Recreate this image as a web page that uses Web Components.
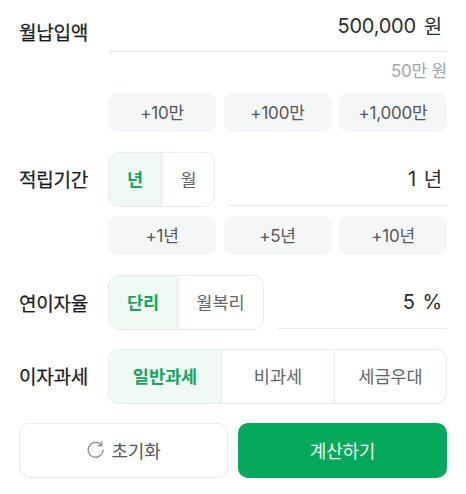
<!DOCTYPE html>
<html lang="ko">
<head>
<meta charset="utf-8">
<title>적금 계산기</title>
<style>
  html, body { margin: 0; padding: 0; background: #fff; }
  body { font-family: Inter, "Noto Sans CJK KR", sans-serif; width: 466px; height: 494px; overflow: hidden; }
</style>
</head>
<body>
<calc-form>
  <form-row label="월납입액" style="--label-top:18px; margin-top:4px">
    <amount-input value="500,000" unit="원" style="height:48px;padding-bottom:4px"></amount-input>
    <div style="font-size:17px;color:#a3a5a8;text-align:right;height:41px;line-height:38px;letter-spacing:-.2px">50만 원</div>
    <quick-buttons items="+10만,+100만,+1,000만"></quick-buttons>
  </form-row>
  <form-row label="적립기간" style="--label-top:17px; margin-top:20px">
    <div class="line" style="display:flex;gap:14px;margin-bottom:9px">
      <seg-toggle items="년,월" widths="53px,53px" style="width:107px"></seg-toggle>
      <amount-input value="1" unit="년" style="flex:1;height:54px"></amount-input>
    </div>
    <quick-buttons items="+1년,+5년,+10년"></quick-buttons>
  </form-row>
  <form-row label="연이자율" style="--label-top:18px; margin-top:20px">
    <div class="line" style="display:flex;gap:14px">
      <seg-toggle items="단리,월복리" widths="69px,85px" style="width:156px"></seg-toggle>
      <amount-input value="5" unit="%" style="flex:1;height:54px"></amount-input>
    </div>
  </form-row>
  <form-row label="이자과세" style="--label-top:17px; margin-top:19px">
    <seg-toggle items="일반과세,비과세,세금우대" widths="113px,112px,1fr"></seg-toggle>
  </form-row>
  <action-bar></action-bar>
</calc-form>

<script>
// 전체 폼 컨테이너
class CalcForm extends HTMLElement {
  constructor() {
    super();
    this.attachShadow({ mode: 'open' }).innerHTML = `
      <style>
        :host { display: block; padding: 0 19px 0 19px; color: #1d1f22; }
      </style>
      <slot></slot>`;
  }
}

// 왼쪽 라벨 + 오른쪽 내용
class FormRow extends HTMLElement {
  constructor() {
    super();
    const label = this.getAttribute('label') || '';
    this.attachShadow({ mode: 'open' }).innerHTML = `
      <style>
        :host { display: grid; grid-template-columns: 89px 339px; }
        .label {
          font-size: 19px; font-weight: 400; color: #1a1c1f; line-height: 24px;
          padding-top: var(--label-top, 14px); letter-spacing: -.2px;
          -webkit-text-stroke: .25px #1a1c1f;
        }
      </style>
      <div class="label">${label}</div>
      <div><slot></slot></div>`;
  }
}

// 밑줄 입력값
class AmountInput extends HTMLElement {
  constructor() {
    super();
    const value = this.getAttribute('value') || '';
    const unit = this.getAttribute('unit') || '';
    this.attachShadow({ mode: 'open' }).innerHTML = `
      <style>
        :host {
          display: flex; justify-content: flex-end; align-items: center; gap: 8px;
          box-sizing: border-box; border-bottom: 1px solid #e6e7e9;
          padding-right: 5px; font-size: 20px; letter-spacing: -.25px; color: #2a2c2f; min-width: 0;
        }
      </style>
      <span>${value}</span><span>${unit}</span>`;
  }
}

// +10만 같은 빠른 입력 버튼 (값에 콤마가 있어서 +로 나눈다)
class QuickButtons extends HTMLElement {
  constructor() {
    super();
    const items = (this.getAttribute('items') || '').split(',+').map(s => s.replace(/^\+/, ''));
    this.attachShadow({ mode: 'open' }).innerHTML = `
      <style>
        :host { display: grid; grid-template-columns: repeat(3, 108px); column-gap: 7.5px; }
        button {
          all: unset; box-sizing: border-box; height: 39px; border-radius: 9px; padding-bottom: 2px;
          background: #f5f6f8; color: #54575b; font-size: 17px; text-align: center;
          letter-spacing: -.2px;
        }
      </style>
      ${items.map(v => `<button>+${v}</button>`).join('')}`;
  }
}

// 세그먼트 토글, 첫 항목이 선택된 상태
class SegToggle extends HTMLElement {
  constructor() {
    super();
    const items = (this.getAttribute('items') || '').split(',');
    const widths = (this.getAttribute('widths') || '').split(',').join(' ');
    this.attachShadow({ mode: 'open' }).innerHTML = `
      <style>
        :host {
          display: grid; grid-template-columns: ${widths}; box-sizing: border-box;
          height: 55px; border: 1px solid #e7ecea; border-radius: 11px; overflow: hidden;
          flex: none; background: #fff;
        }
        div {
          display: flex; align-items: center; justify-content: center; padding-bottom: 3px;
          font-size: 17.5px; color: #63666a; border-left: 1px solid #e7ecea;
        }
        div.on {
          background: #f0faf5; color: #17a45e; font-weight: 700;
          border-left: 0; border-right: 1px solid #d9eee3;
        }
        div.on + div { border-left: 0; }
      </style>
      ${items.map((v, i) => `<div class="${i === 0 ? 'on' : ''}">${v}</div>`).join('')}`;
  }
}

// 하단 초기화 / 계산하기 버튼
class ActionBar extends HTMLElement {
  constructor() {
    super();
    this.attachShadow({ mode: 'open' }).innerHTML = `
      <style>
        :host { display: grid; grid-template-columns: 209px 209px; column-gap: 10px; margin-top: 19px; }
        button {
          all: unset; box-sizing: border-box; height: 55px; border-radius: 10px; padding-bottom: 2px;
          display: flex; align-items: center; justify-content: center; gap: 6px;
          font-size: 18px; letter-spacing: -.2px;
        }
        .reset { border: 1px solid #e9eaec; color: #54575b; background: #fff; }
        .go { background: #06a95b; color: #eefaf3; }
        svg { width: 19px; height: 19px; fill: none; stroke: #8d9094; stroke-width: 1.3; stroke-linecap: round; stroke-linejoin: round; }
      </style>
      <button class="reset">
        <svg viewBox="0 0 19 19">
          <path d="M15.4 5.2A7.4 7.4 0 1 0 17 10"/>
          <path d="M15.9 1.7v3.9h-3.9"/>
        </svg>
        초기화
      </button>
      <button class="go">계산하기</button>`;
  }
}

customElements.define('calc-form', CalcForm);
customElements.define('form-row', FormRow);
customElements.define('amount-input', AmountInput);
customElements.define('quick-buttons', QuickButtons);
customElements.define('seg-toggle', SegToggle);
customElements.define('action-bar', ActionBar);
</script>
</body>
</html>
